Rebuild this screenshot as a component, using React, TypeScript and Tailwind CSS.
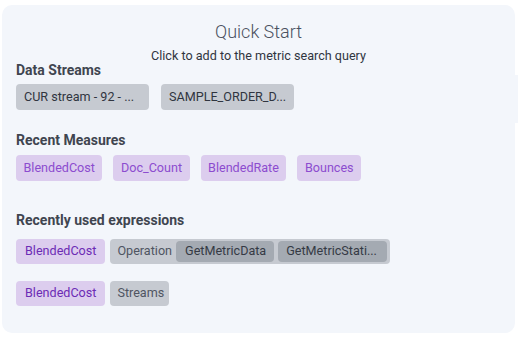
const STREAMS = ["CUR stream - 92 - ...", "SAMPLE_ORDER_D..."];
const MEASURES = ["BlendedCost", "Doc_Count", "BlendedRate", "Bounces"];

function Label({ children, className = "" }: { children: React.ReactNode; className?: string }) {
  return (
    <div className={`text-[14px] font-bold leading-[18px] text-[#3f4550] ${className}`}>
      {children}
    </div>
  );
}

function Measure({ name, dark = false }: { name: string; dark?: boolean }) {
  return (
    <span
      className={`flex items-center rounded-[4px] bg-[#dccdee] text-[12.6px] ${
        dark ? "h-[25px] px-[9px] text-[#6c2bb5]" : "h-[26px] px-[7.5px] text-[#8c4ccf]"
      }`}
    >
      {name}
    </span>
  );
}

export default function App() {
  return (
    <div className="min-h-[341px] bg-white pt-[5px] pl-[2px] font-['Roboto',sans-serif]">
      <div className="h-[328px] w-[513px] rounded-[10px] bg-[#f3f6fb] px-[14px] pt-[15px]">
        <h2 className="text-center text-[18px] font-light leading-[24px] text-[#4a5160]">
          Quick Start
        </h2>
        <p className="mt-[4px] text-center text-[12.6px] leading-[16px] text-[#30353f]">
          Click to add to the metric search query
        </p>

        <Label className="-mt-[3px]">Data Streams</Label>
        <div className="-mr-[17px] -mt-[4px] flex gap-3 bg-[#f3f6fb] pt-[9px] pb-[13px]">
          {STREAMS.map((s) => (
            <span
              key={s}
              className="flex h-[26px] w-[133px] items-center rounded-[4px] bg-[#c6cad1] px-2 text-[12.6px] whitespace-nowrap text-[#30353f]"
            >
              {s}
            </span>
          ))}
        </div>

        <Label className="mt-[8px]">Recent Measures</Label>
        <div className="mt-[6px] flex gap-[11px]">
          {MEASURES.map((m) => (
            <Measure key={m} name={m} />
          ))}
        </div>

        <Label className="mt-[30px]">Recently used expressions</Label>
        <div className="mt-[10px] flex gap-[5px]">
          <Measure name="BlendedCost" dark />
          <div className="flex h-[25px] items-center gap-[4px] rounded-[4px] bg-[#c6cad1] pr-[3px] pl-[7px] text-[12.6px]">
            <span className="text-[#4f5562]">Operation</span>
            <span className="flex h-[21px] items-center rounded-[4px] bg-[#a4aab2] pr-[8px] pl-[9px] text-[#353a45]">
              GetMetricData
            </span>
            <span className="flex h-[21px] items-center rounded-[4px] bg-[#a4aab2] pr-[10px] pl-[8px] text-[#353a45]">
              GetMetricStati...
            </span>
          </div>
        </div>
        <div className="mt-[17px] flex gap-[5px]">
          <Measure name="BlendedCost" dark />
          <span className="flex h-[25px] items-center rounded-[4px] bg-[#c6cad1] pr-[5px] pl-[7px] text-[12.6px] text-[#4f5562]">
            Streams
          </span>
        </div>
      </div>
    </div>
  );
}
